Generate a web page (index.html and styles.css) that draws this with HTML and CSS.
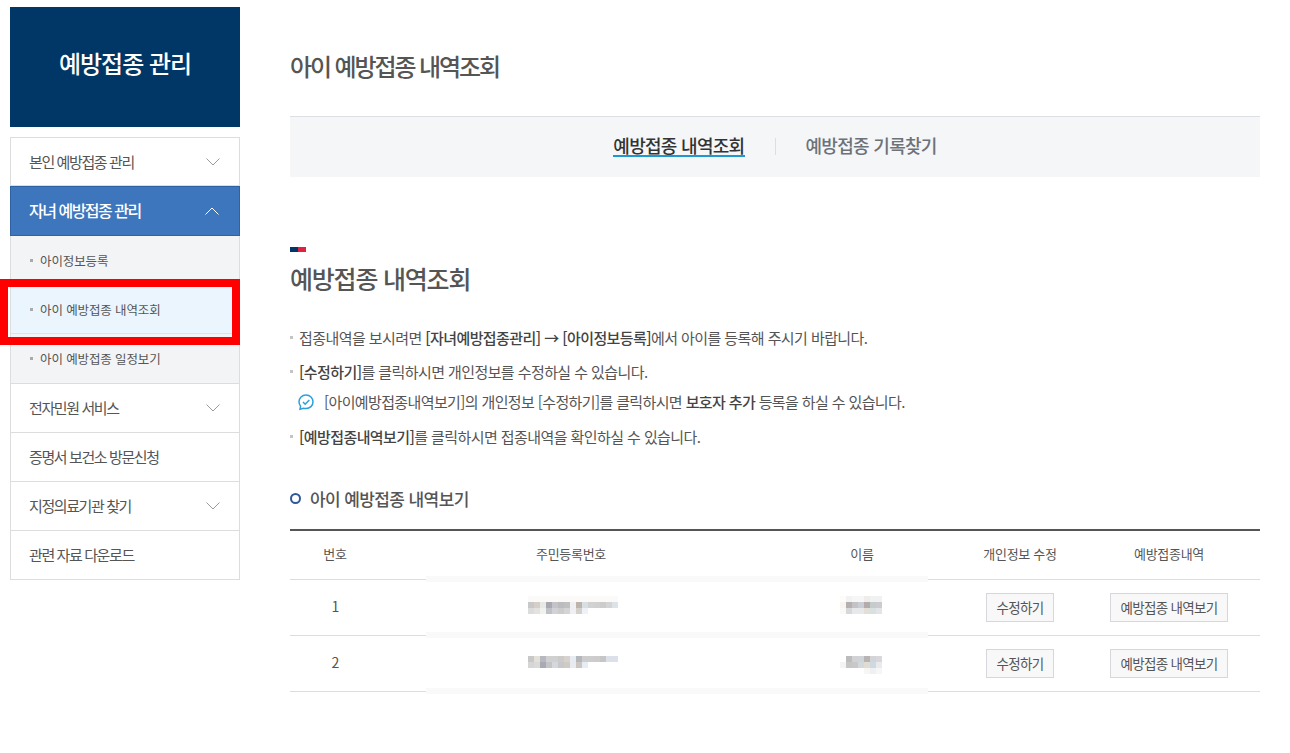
FILE: index.html
```html
<!DOCTYPE html>
<html lang="ko">
<head>
<meta charset="utf-8">
<title>아이 예방접종 내역조회</title>
<link rel="stylesheet" href="styles.css">
</head>
<body>
<div class="page">
  <aside class="side">
    <div class="side-head">예방접종 관리</div>
    <nav class="menu">
      <div class="m-item"><span>본인 예방접종 관리</span><svg class="chev" viewBox="0 0 14 8"><path d="M.5.5 7 7 13.5.5"/></svg></div>
      <div class="m-item active"><span>자녀 예방접종 관리</span><svg class="chev" viewBox="0 0 14 8"><path d="M.5 7.5 7 1l6.500 6.500"/></svg></div>
      <div class="sub">
        <div class="s-item">아이정보등록</div>
        <div class="s-item current">아이 예방접종 내역조회</div>
        <div class="s-item">아이 예방접종 일정보기</div>
      </div>
      <div class="m-item"><span>전자민원 서비스</span><svg class="chev" viewBox="0 0 14 8"><path d="M.5.5 7 7 13.5.5"/></svg></div>
      <div class="m-item"><span>증명서 보건소 방문신청</span></div>
      <div class="m-item"><span>지정의료기관 찾기</span><svg class="chev" viewBox="0 0 14 8"><path d="M.5.5 7 7 13.5.5"/></svg></div>
      <div class="m-item"><span>관련 자료 다운로드</span></div>
    </nav>
  </aside>
  <main class="main">
    <h1 class="page-title">아이 예방접종 내역조회</h1>
    <div class="tabs">
      <span class="tab on">예방접종 내역조회</span>
      <i class="tab-sep"></i>
      <span class="tab">예방접종 기록찾기</span>
    </div>
    <div class="flag"><i></i><i></i></div>
    <h2 class="sec-title">예방접종 내역조회</h2>
    <ul class="notes">
      <li>접종내역을 보시려면 <b>[자녀예방접종관리] → [아이정보등록]</b>에서 아이를 등록해 주시기 바랍니다.</li>
      <li class="tight"><b>[수정하기]</b>를 클릭하시면 개인정보를 수정하실 수 있습니다.</li>
      <li class="tip"><svg class="tip-ic" viewBox="0 0 18 18"><path d="M9 2c4 0 7 2.900 7 6.800s-3 6.800-7 6.800c-.9 0-1.700-.1-2.500-.4L3 16.200l.6-3C2.600 12 2 10.500 2 8.800 2 4.900 5 2 9 2z"/><path d="m6 9 2.200 2.200L12.300 7"/></svg>[아이예방접종내역보기]의 개인정보 [수정하기]를 클릭하시면 <b>보호자 추가</b> 등록을 하실 수 있습니다.</li>
      <li><b>[예방접종내역보기]</b>를 클릭하시면 접종내역을 확인하실 수 있습니다.</li>
    </ul>
    <h3 class="sub-title">아이 예방접종 내역보기</h3>
    <div class="tbl">
      <div class="tr th"><span>번호</span><span>주민등록번호</span><span>이름</span><span>개인정보 수정</span><span>예방접종내역</span></div>
      <div class="tr">
        <span class="num">1</span>
        <span class="cell-blur"><svg class="blur wide" viewBox="0 0 90 55" shape-rendering="crispEdges">
          <rect y="16" width="90" height="6" fill="#fbfaf9"/>
          <rect x="0" y="22" width="6" height="6" fill="#c8c8c8"/><rect x="6" y="22" width="6" height="6" fill="#d6cfc8"/><rect x="12" y="22" width="6" height="6" fill="#e6e9e6"/><rect x="18" y="22" width="6" height="6" fill="#a8a8b0"/><rect x="24" y="22" width="6" height="6" fill="#c4c4c8"/><rect x="30" y="22" width="6" height="6" fill="#bcbcc0"/><rect x="36" y="22" width="6" height="6" fill="#c0c0c0"/><rect x="42" y="22" width="6" height="6" fill="#eef0f2"/><rect x="48" y="22" width="6" height="6" fill="#bdb5ab"/><rect x="54" y="22" width="6" height="6" fill="#d8dfe4"/><rect x="60" y="22" width="6" height="6" fill="#d2d2d2"/><rect x="66" y="22" width="6" height="6" fill="#d0d0d0"/><rect x="72" y="22" width="6" height="6" fill="#cccccc"/><rect x="78" y="22" width="6" height="6" fill="#d4d4d4"/><rect x="84" y="22" width="6" height="6" fill="#dbe2e8"/>
          <rect x="0" y="28" width="6" height="6" fill="#dcdcdc"/><rect x="6" y="28" width="6" height="6" fill="#e4e2de"/><rect x="12" y="28" width="6" height="6" fill="#f0f2ee"/><rect x="18" y="28" width="6" height="6" fill="#c0c0c8"/><rect x="24" y="28" width="6" height="6" fill="#d2d2d6"/><rect x="30" y="28" width="6" height="6" fill="#cccccc"/><rect x="36" y="28" width="6" height="6" fill="#d4d4d4"/><rect x="42" y="28" width="6" height="6" fill="#eef0f4"/><rect x="48" y="28" width="6" height="6" fill="#d4d0ca"/><rect x="54" y="28" width="6" height="6" fill="#eef1f8"/>
        </svg></span>
        <span class="cell-blur"><svg class="blur short" viewBox="0 0 42 55" shape-rendering="crispEdges">
          <rect x="0" y="16" width="6" height="6" fill="#fdfcfb"/><rect x="6" y="16" width="6" height="6" fill="#f2f2f2"/><rect x="12" y="16" width="12" height="6" fill="#f6f6f6"/><rect x="24" y="16" width="6" height="6" fill="#f0ecec"/><rect x="30" y="16" width="12" height="6" fill="#f0f2f2"/>
          <rect x="0" y="22" width="6" height="6" fill="#faf4f0"/><rect x="6" y="22" width="6" height="6" fill="#b4b0b2"/><rect x="12" y="22" width="6" height="6" fill="#c4c2c4"/><rect x="18" y="22" width="6" height="6" fill="#c8ced4"/><rect x="24" y="22" width="6" height="6" fill="#b4acac"/><rect x="30" y="22" width="6" height="6" fill="#c4cccc"/><rect x="36" y="22" width="6" height="6" fill="#ccccd0"/>
          <rect x="0" y="28" width="6" height="6" fill="#fbf9f6"/><rect x="6" y="28" width="6" height="6" fill="#d8d8da"/><rect x="12" y="28" width="6" height="6" fill="#e6e8ea"/><rect x="18" y="28" width="6" height="6" fill="#e6e8ec"/><rect x="24" y="28" width="6" height="6" fill="#e4ded8"/><rect x="30" y="28" width="6" height="6" fill="#d8e0e0"/><rect x="36" y="28" width="6" height="6" fill="#e2e4e8"/>
        </svg></span>
        <span><a class="btn">수정하기</a></span>
        <span><a class="btn">예방접종 내역보기</a></span>
      </div>
      <div class="tr">
        <span class="num">2</span>
        <span class="cell-blur"><svg class="blur wide" viewBox="0 0 90 55" shape-rendering="crispEdges">
          <rect x="0" y="20" width="6" height="6" fill="#c8c8c8"/><rect x="6" y="20" width="6" height="6" fill="#e4e0da"/><rect x="12" y="20" width="6" height="6" fill="#b8b8c0"/><rect x="18" y="20" width="12" height="6" fill="#d0d0d0"/><rect x="30" y="20" width="6" height="6" fill="#cccbc9"/><rect x="36" y="20" width="6" height="6" fill="#d8d2cc"/><rect x="42" y="20" width="6" height="6" fill="#e6ecf2"/><rect x="48" y="20" width="6" height="6" fill="#b4b8be"/><rect x="54" y="20" width="12" height="6" fill="#cdcdcd"/><rect x="66" y="20" width="6" height="6" fill="#cccccc"/><rect x="72" y="20" width="6" height="6" fill="#c6c6c6"/><rect x="78" y="20" width="12" height="6" fill="#dce0e8"/>
          <rect x="0" y="26" width="6" height="6" fill="#d6d6d6"/><rect x="6" y="26" width="6" height="6" fill="#dcdad6"/><rect x="12" y="26" width="6" height="6" fill="#a8aab4"/><rect x="18" y="26" width="6" height="6" fill="#c4c4c8"/><rect x="24" y="26" width="6" height="6" fill="#d4d8dc"/><rect x="30" y="26" width="6" height="6" fill="#c8c8ca"/><rect x="36" y="26" width="6" height="6" fill="#cfcac4"/><rect x="42" y="26" width="6" height="6" fill="#e8ecf0"/><rect x="48" y="26" width="6" height="6" fill="#cbc6c0"/><rect x="54" y="26" width="6" height="6" fill="#e8ecf6"/>
        </svg></span>
        <span class="cell-blur"><svg class="blur short" viewBox="0 0 42 55" shape-rendering="crispEdges">
          <rect x="6" y="20" width="6" height="6" fill="#bcbcbc"/><rect x="12" y="20" width="6" height="6" fill="#d2d2d4"/><rect x="18" y="20" width="6" height="6" fill="#d0d4d8"/><rect x="24" y="20" width="6" height="6" fill="#b8b4b4"/><rect x="30" y="20" width="6" height="6" fill="#d2d4d8"/><rect x="36" y="20" width="6" height="6" fill="#d8d8dc"/>
          <rect x="0" y="26" width="6" height="6" fill="#f4f4f4"/><rect x="6" y="26" width="6" height="6" fill="#c6c6c6"/><rect x="12" y="26" width="6" height="6" fill="#c8c8c8"/><rect x="18" y="26" width="6" height="6" fill="#d2d8dc"/><rect x="24" y="26" width="6" height="6" fill="#e0dcd4"/><rect x="30" y="26" width="6" height="6" fill="#d0d8e0"/><rect x="36" y="26" width="6" height="6" fill="#e8eaee"/>
          <rect x="24" y="32" width="6" height="6" fill="#f8f6f2"/><rect x="30" y="32" width="6" height="6" fill="#eef0f4"/><rect x="36" y="32" width="6" height="6" fill="#f6f6f6"/>
        </svg></span>
        <span><a class="btn">수정하기</a></span>
        <span><a class="btn">예방접종 내역보기</a></span>
      </div>
    </div>
  </main>
  <div class="mark"></div>
</div>
</body>
</html>
```
FILE: styles.css
```css
* { box-sizing: border-box; }
html, body { margin: 0; padding: 0; background: #fff; }
body { font-family: "Noto Sans CJK KR", "Noto Sans", sans-serif; color: #555; overflow: hidden; }
.page { position: relative; width: 1290px; height: 753px; display: flex; padding: 7px 30px 0 10px; gap: 50px; }
.side { width: 230px; flex: none; }
.side-head { height: 120px; background: #003767; color: #fff; font-size: 24px; font-weight: 500; letter-spacing: -1px; display: flex; align-items: center; justify-content: center; padding-bottom: 9px; }
.menu { margin-top: 10px; border: 1px solid #ddd; border-bottom: 0; }
.m-item { height: 49px; display: flex; align-items: center; justify-content: space-between; padding: 0 19px 0 18px; font-size: 15px; letter-spacing: -1.4px; color: #555; border-bottom: 1px solid #ddd; }
.m-item:first-child { height: 48px; }
.m-item > span { padding-bottom: 2px; }
.m-item:first-child > span { padding-bottom: 0; }
.m-item.active { background: #3d76bc; color: #fff; font-size: 16px; font-weight: 500; letter-spacing: -1.5px; margin: 0 -1px; padding: 0 20px 0 18px; border: 1px solid #2f62a3; height: 50px; }
.chev { width: 14px; height: 8px; fill: none; stroke: #9a9a9a; stroke-width: 1; }
.active .chev { stroke: #fff; }
.sub { background: #f3f4f6; border-bottom: 1px solid #ddd; }
.s-item { height: 49px; display: flex; align-items: center; padding-left: 29px; font-size: 12.500px; letter-spacing: -.12px; color: #555; position: relative; }
.s-item::before { content: ""; position: absolute; left: 19px; top: 23px; width: 3px; height: 3px; background: #aaa; }
.s-item.current { background: #ebf5fd; border-bottom: 1px solid #dde3e8; }
.main { width: 970px; flex: none; }
.page-title { margin: 41px 0 0; font-size: 24px; line-height: 36px; font-weight: 500; letter-spacing: -2.1px; color: #555; }
.tabs { margin-top: 32px; height: 61px; background: #f4f6f8; border-top: 1px solid #dcdfe4; display: flex; align-items: center; justify-content: center; gap: 30px; padding: 0 0 2px 0; }
.tab { font-size: 18px; line-height: 20px; font-weight: 500; letter-spacing: -.7px; color: #6c7277; border-bottom: 2px solid transparent; }
.tab.on { color: #333; border-bottom-color: #1f98d0; }
.tab-sep { width: 1px; height: 17px; background: #dcdfe2; }
.flag { display: flex; margin-top: 70px; height: 5px; }
.flag i { width: 8px; background: #003767; }
.flag i + i { background: #e0213f; }
.sec-title { margin: 8px 0 0; font-size: 25px; line-height: 36px; font-weight: 500; letter-spacing: -1.2px; color: #555; }
.notes { list-style: none; margin: 30px 0 0; padding: 0; font-size: 15px; letter-spacing: -.58px; color: #555; }
.notes li { position: relative; padding-left: 9px; line-height: 24px; margin-bottom: 10px; white-space: nowrap; }
.notes li::before { content: ""; position: absolute; left: 0; top: 10px; width: 3px; height: 3px; background: #c4c4c4; }
.notes li.tight { margin-bottom: 6px; }
.notes b { font-weight: 500; color: #444; }
.notes li.tip { padding-left: 34px; letter-spacing: -.62px; margin-bottom: 11px; }
.notes li.tip::before { display: none; }
.tip-ic { position: absolute; left: 7px; top: 3px; width: 18px; height: 18px; fill: none; stroke: #2aa0d8; stroke-width: 1.500; }
.sub-title { position: relative; margin: 38px 0 0; padding-left: 20px; font-size: 17px; line-height: 24px; font-weight: 500; letter-spacing: -.6px; color: #555; }
.sub-title::before { content: ""; position: absolute; left: 0; top: 6px; width: 7px; height: 7px; border: 2.500px solid #2f5896; border-radius: 50%; }
.tbl { margin-top: 18px; border-top: 2px solid #555; }
.tr { position: relative; display: grid; grid-template-columns: 90px 382px 200px 116px 182px; height: 56px; border-bottom: 1px solid #ddd; font-size: 13px; letter-spacing: -.3px; text-align: center; align-items: center; }
.tr > span { display: flex; justify-content: center; align-items: center; }
.tr > span.cell-blur { align-self: stretch; }
.tr::after { content: ""; position: absolute; left: 136px; width: 502px; bottom: -3px; height: 6px; background: #f9f9f9; }
.tr.th { height: 49px; padding-bottom: 4px; }
.num { font-size: 14px; color: #555; letter-spacing: 0; padding: 0 0 4px 1px; }
.blur { display: block; height: 55px; }
.wide { width: 90px; margin-left: 4px; }
.short { width: 42px; margin-right: 2px; }
.btn { display: inline-block; height: 29px; line-height: 27px; padding: 0 10px; background: #f8f8f8; border: 1px solid #d5d7dc; font-size: 13.500px; letter-spacing: -.7px; color: #555; }
.mark { position: absolute; left: 0; top: 279px; width: 240px; height: 66px; border: 8px solid #f00; }
```
